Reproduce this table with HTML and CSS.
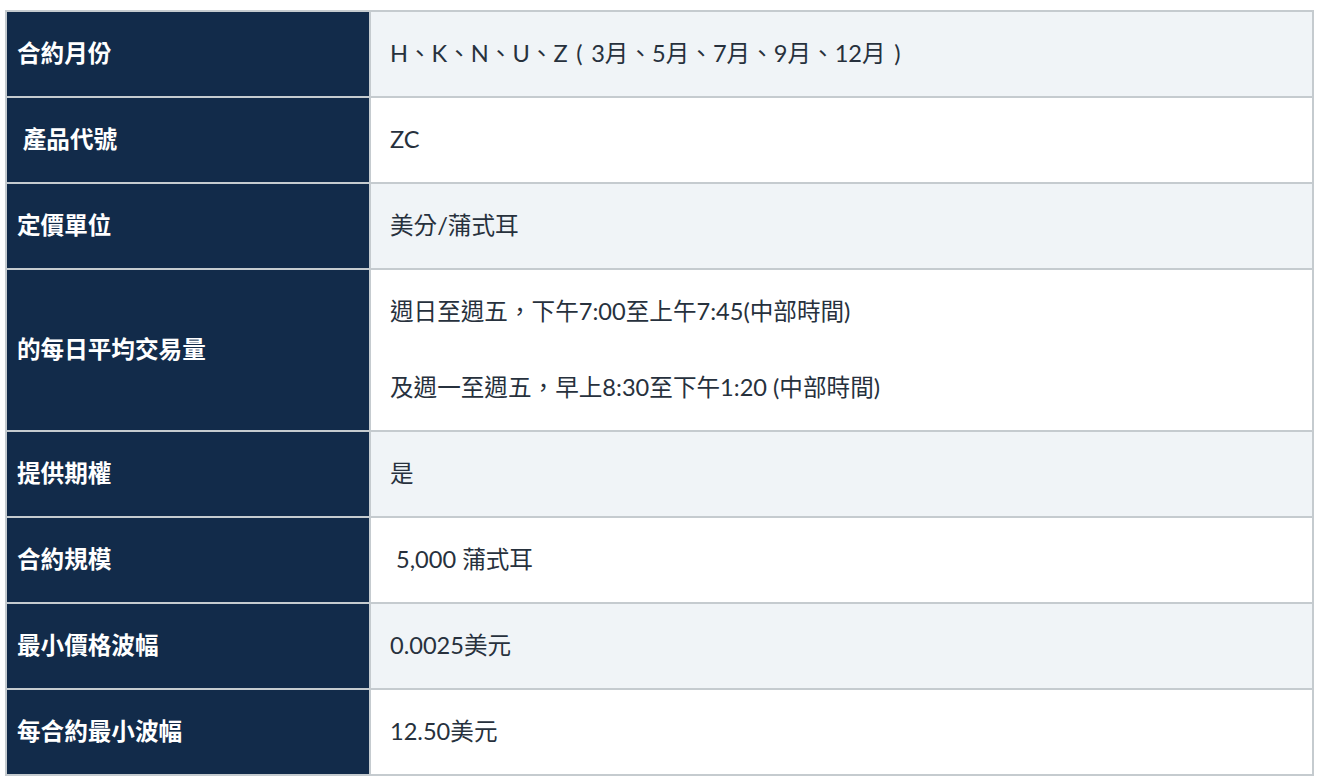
FILE: index.html
```html
<!DOCTYPE html>
<html lang="zh-TW">
<head>
<meta charset="utf-8">
<title>合約規格</title>
<link rel="stylesheet" href="styles.css">
</head>
<body>
<div class="wrap">
<table class="spec">
  <tbody>
    <tr class="odd"><th>合約月份</th><td>H、K、N、U、Z<span class="fwp">(</span>3月、5月、7月、9月、12月<span class="fwp">)</span></td></tr>
    <tr><th>&nbsp;產品代號</th><td>ZC</td></tr>
    <tr class="odd"><th>定價單位</th><td>美分/蒲式耳</td></tr>
    <tr><th>的每日平均交易量</th><td>週日至週五，下午7:00至上午7:45(中部時間)<br><br>及週一至週五，早上8:30至下午1:20 (中部時間)</td></tr>
    <tr class="odd"><th>提供期權</th><td>是</td></tr>
    <tr><th>合約規模</th><td>&nbsp;5,000 蒲式耳</td></tr>
    <tr class="odd"><th>最小價格波幅</th><td>0.0025美元</td></tr>
    <tr><th>每合約最小波幅</th><td>12.50美元</td></tr>
  </tbody>
</table>
</div>
</body>
</html>
```

FILE: styles.css
```css
html, body {
  margin: 0;
  padding: 0;
  background: #ffffff;
}
.wrap {
  padding: 10px 8px 0 5px;
}
.spec {
  width: 1309px;
  border-collapse: collapse;
  border: 2px solid #c5cbcf;
  font-family: Lato, "Noto Sans CJK TC", sans-serif;
  font-size: 23.6px;
  line-height: 38px;
}
.spec th, .spec td {
  border: 2px solid #c5cbcf;
  padding: 22px 19px 24px 19px;
  vertical-align: middle;
  text-align: left;
}
.spec th {
  width: 331px;
  padding-left: 10px;
  padding-right: 21px;
  background: #122b4a;
  color: #ffffff;
  font-weight: 700;
}
.spec td {
  background: #ffffff;
  color: #27313d;
  font-weight: 400;
}
.spec tr.odd td {
  background: #f0f4f7;
}
.fwp {
  display: inline-block;
  width: 1em;
  text-align: center;
}
```
